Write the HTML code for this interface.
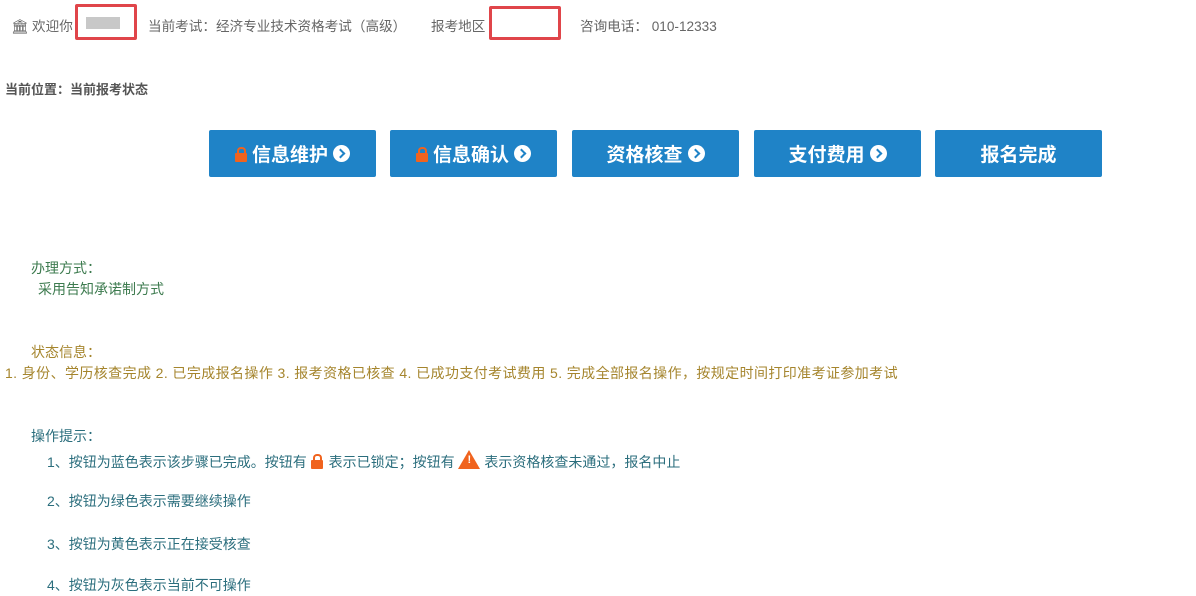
<!DOCTYPE html>
<html><head><meta charset="utf-8"><style>
body{margin:0;width:1196px;height:596px;background:#fff;font-family:"Liberation Sans","Noto Sans CJK SC",sans-serif;position:relative;overflow:hidden}
.a{position:absolute;white-space:nowrap}
.h{font-size:13.6px;color:#666;top:15px}
.box{position:absolute;border:3px solid #e0454a;border-radius:2px}
.btn{position:absolute;top:130px;width:167px;height:47px;background:#1f83c7;border-radius:2px;color:#fff;font-size:19px;font-weight:bold;display:flex;align-items:center;justify-content:center;gap:3px}
.arr{display:inline-block;width:17px;height:17px;border-radius:50%;background:#fff;position:relative;margin-left:2px}
.arr:after{content:"";position:absolute;left:4px;top:5px;width:5px;height:5px;border-right:2.5px solid #1f83c7;border-top:2.5px solid #1f83c7;transform:rotate(45deg)}
.lock{display:inline-block;width:12px;height:14px;position:relative;margin-right:2px}
.lock:before{content:"";position:absolute;left:2px;top:0;width:5px;height:6px;border:2px solid #f0631e;border-bottom:none;border-radius:4px 4px 0 0}
.lock:after{content:"";position:absolute;left:0;top:6px;width:12px;height:9px;background:#f0631e;border-radius:1px}
.g{color:#3d7b4f;font-size:14px}
.y{color:#a5852d;font-size:14px}
.t{color:#2b6e7d;font-size:14px}
</style></head><body>
<div class="a h" style="left:11px"><span style="color:#555">🏛</span> 欢迎你</div>
<div class="a" style="left:86px;top:17px;width:34px;height:12px;background:#c8c8c8"></div>
<div class="box" style="left:75px;top:4px;width:56px;height:30px"></div>
<div class="a h" style="left:148px">当前考试：经济专业技术资格考试（高级）</div>
<div class="a h" style="left:431px">报考地区</div>
<div class="box" style="left:489px;top:6px;width:66px;height:28px"></div>
<div class="a h" style="left:580px">咨询电话： 010-12333</div>
<div class="a" style="left:5px;top:79px;font-size:13px;font-weight:bold;color:#555">当前位置：当前报考状态</div>
<div class="btn" style="left:209px"><span class="lock"></span>信息维护<span class="arr"></span></div>
<div class="btn" style="left:390px"><span class="lock"></span>信息确认<span class="arr"></span></div>
<div class="btn" style="left:572px">资格核查<span class="arr"></span></div>
<div class="btn" style="left:754px">支付费用<span class="arr"></span></div>
<div class="btn" style="left:935px">报名完成</div>
<div class="a g" style="left:31px;top:258px">办理方式：</div>
<div class="a g" style="left:38px;top:279px">采用告知承诺制方式</div>
<div class="a y" style="left:31px;top:342px">状态信息：</div>
<div class="a y" style="left:5px;top:363px;letter-spacing:0.4px">1. 身份、学历核查完成 2. 已完成报名操作 3. 报考资格已核查 4. 已成功支付考试费用 5. 完成全部报名操作，按规定时间打印准考证参加考试</div>
<div class="a t" style="left:31px;top:426px">操作提示：</div>
<div class="a t" style="left:47px;top:450px">1、按钮为蓝色表示该步骤已完成。按钮有 <span class="lock" style="vertical-align:-1px"></span> 表示已锁定；按钮有 <span style="display:inline-block;width:0;height:0;border-left:11px solid transparent;border-right:11px solid transparent;border-bottom:19px solid #f0631e;position:relative;vertical-align:-2px"><b style="position:absolute;left:-2px;top:4px;color:#fff;font-size:11px">!</b></span> 表示资格核查未通过，报名中止</div>
<div class="a t" style="left:47px;top:491px">2、按钮为绿色表示需要继续操作</div>
<div class="a t" style="left:47px;top:534px">3、按钮为黄色表示正在接受核查</div>
<div class="a t" style="left:47px;top:575px">4、按钮为灰色表示当前不可操作</div>
</body></html>
